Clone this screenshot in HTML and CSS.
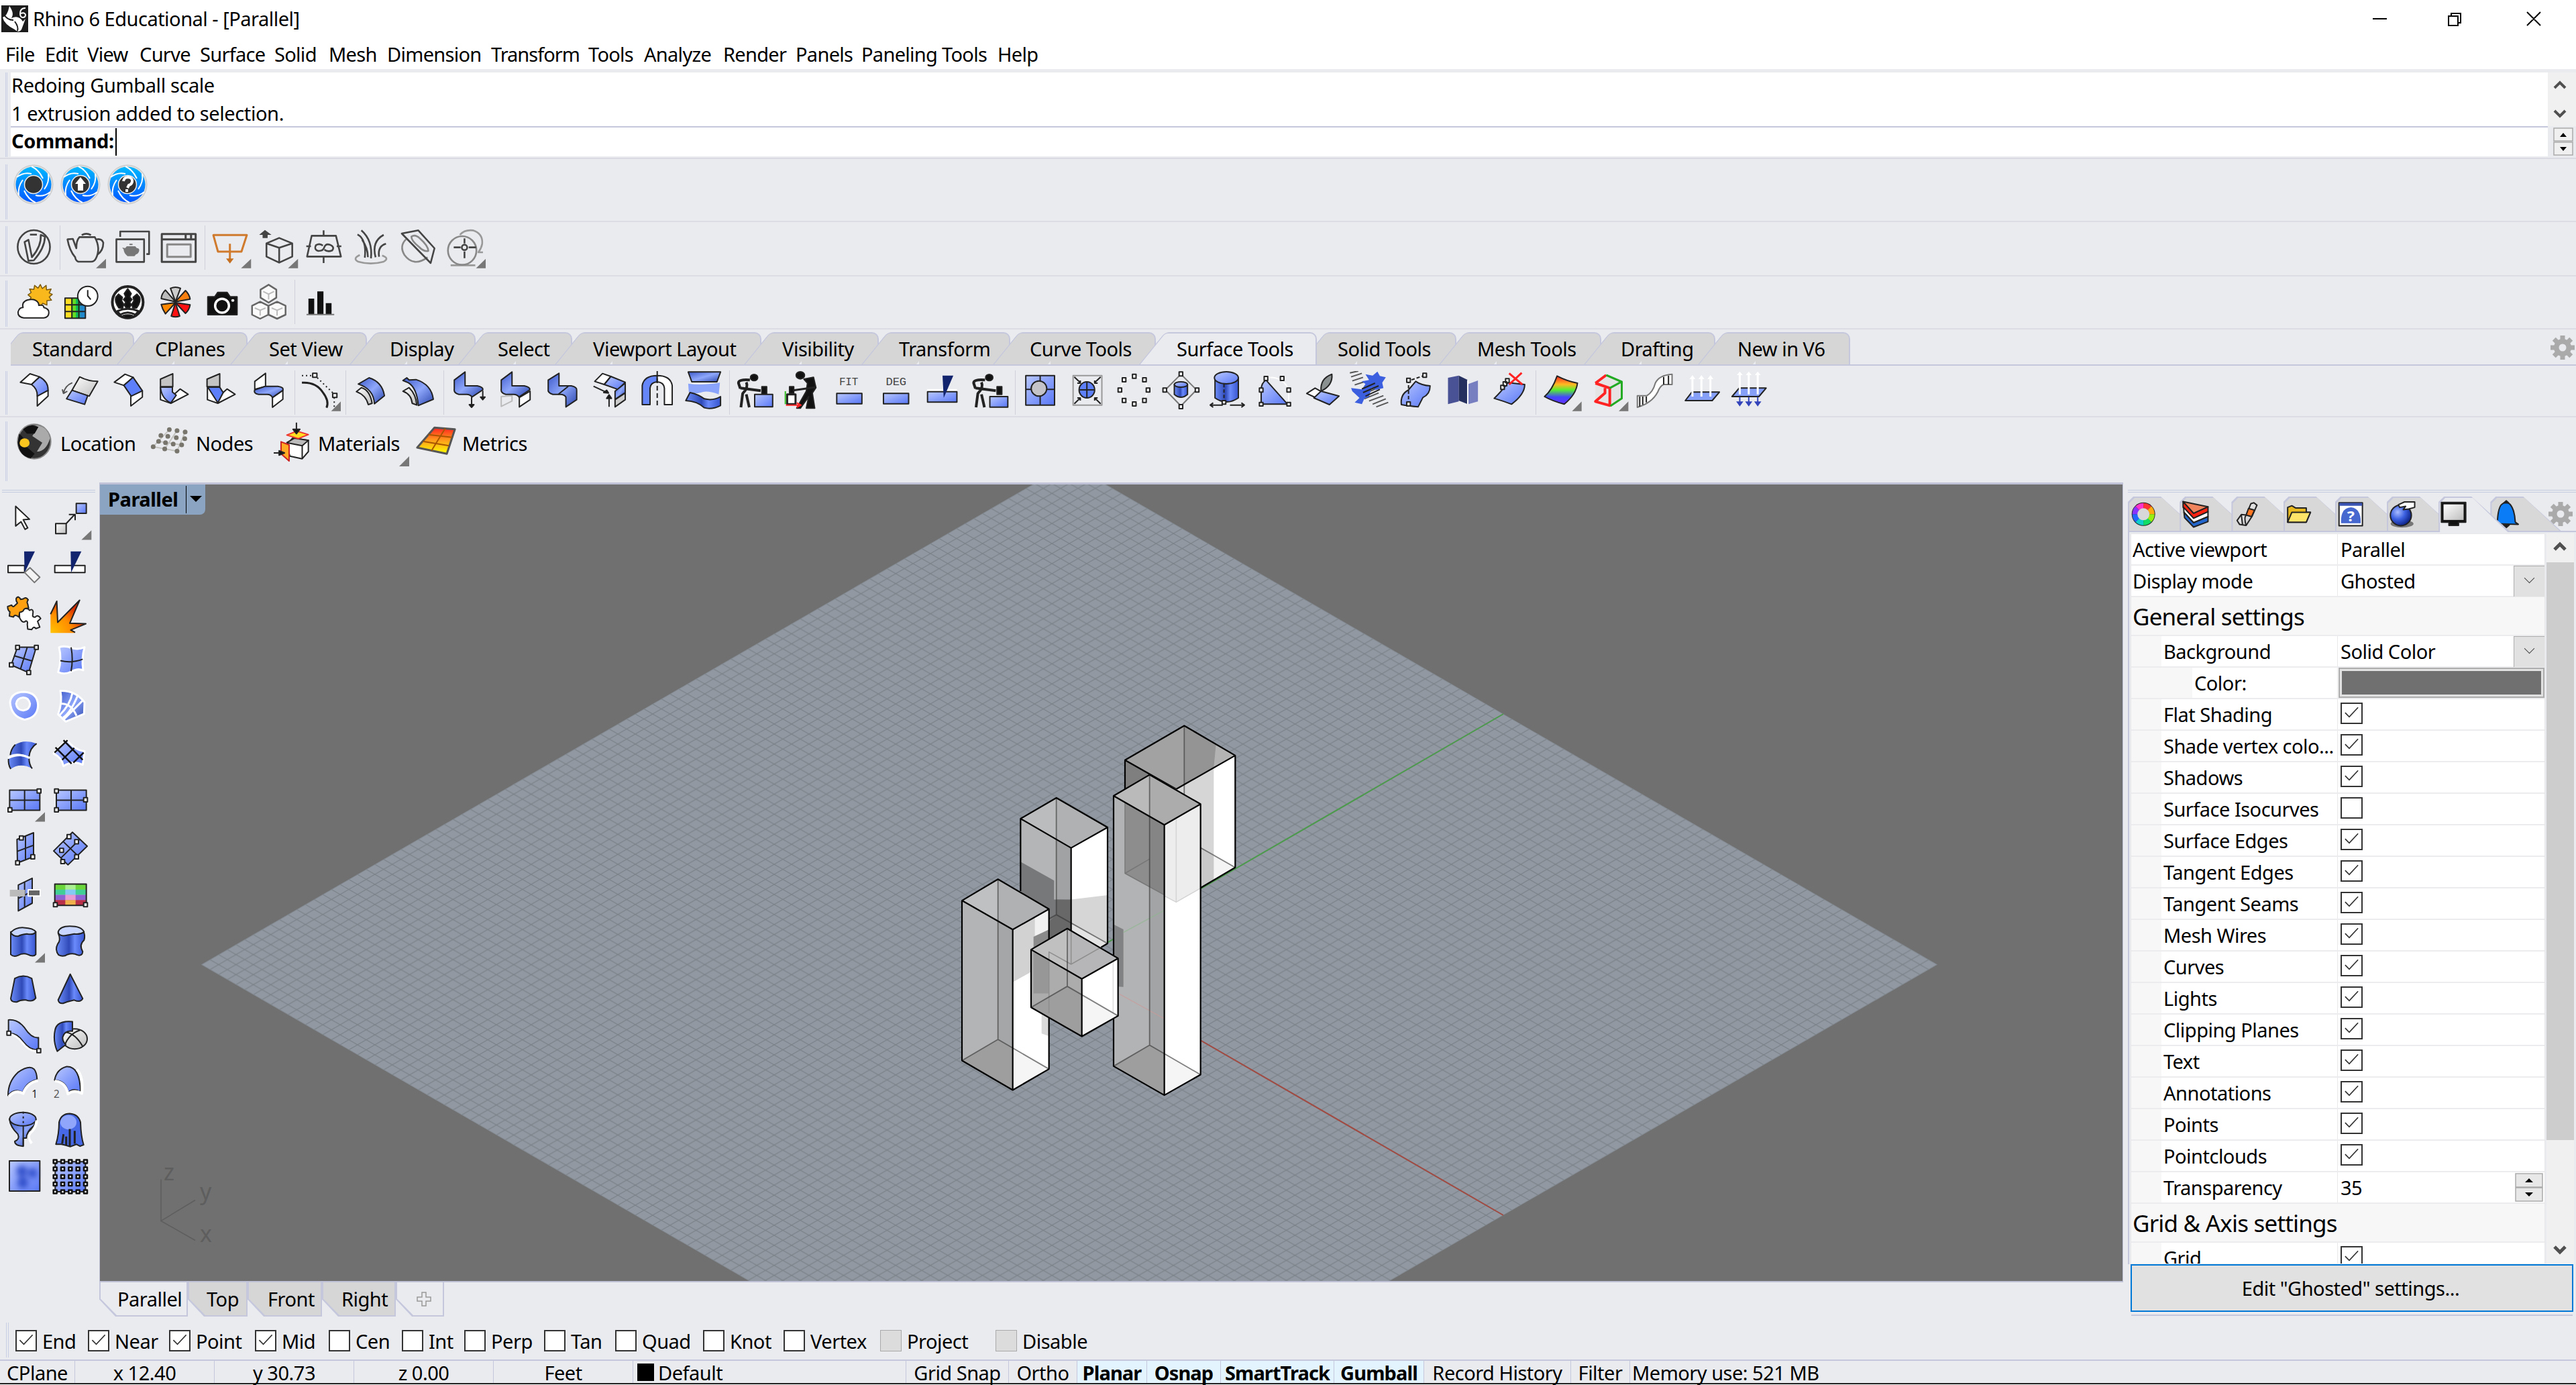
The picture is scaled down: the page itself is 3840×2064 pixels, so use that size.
FILE: index.html
```html
<!DOCTYPE html>
<html lang="en">
<head>
<meta charset="utf-8">
<title>Rhino 6 Educational - [Parallel]</title>
<link rel="stylesheet" href="styles.css">
</head>
<body>
<svg class="defs" width="0" height="0">
  <defs>
    <linearGradient id="gb" x1="0" y1="0" x2="1" y2="1"><stop offset="0" stop-color="#b9c8ff"/><stop offset="1" stop-color="#5877f6"/></linearGradient>
    <linearGradient id="gd" x1="0" y1="0" x2="1" y2="1"><stop offset="0" stop-color="#3b58c8"/><stop offset=".5" stop-color="#8fa8fb"/><stop offset="1" stop-color="#2a45ad"/></linearGradient>
    <linearGradient id="gh" x1="0" y1="0" x2="1" y2="0"><stop offset="0" stop-color="#6d8df8"/><stop offset=".45" stop-color="#2f4ab8"/><stop offset=".65" stop-color="#6a89fa"/><stop offset="1" stop-color="#3655cf"/></linearGradient>
    <linearGradient id="gg" x1="0" y1="0" x2="1" y2="1"><stop offset="0" stop-color="#fff"/><stop offset="1" stop-color="#bdbdbd"/></linearGradient>
    <linearGradient id="gr" x1="0" y1="0" x2="0" y2="1"><stop offset="0" stop-color="#f22"/><stop offset=".3" stop-color="#fb2"/><stop offset=".5" stop-color="#5e3"/><stop offset=".75" stop-color="#44f"/><stop offset="1" stop-color="#63f"/></linearGradient>
    <linearGradient id="ga" x1="0" y1="0" x2="0" y2="1"><stop offset="0" stop-color="#00b8ff"/><stop offset="1" stop-color="#0058ff"/></linearGradient>
    <linearGradient id="gm" x1="0" y1="0" x2="0" y2="1"><stop offset="0" stop-color="#f22"/><stop offset=".5" stop-color="#ffa01c"/><stop offset="1" stop-color="#ff0"/></linearGradient>
    <radialGradient id="gs" cx=".35" cy=".35" r=".7"><stop offset="0" stop-color="#a8bcff"/><stop offset=".5" stop-color="#3b60e0"/><stop offset="1" stop-color="#0a1f80"/></radialGradient>
    <radialGradient id="gf" cx="0" cy="1" r="1"><stop offset="0" stop-color="#ffc400"/><stop offset=".6" stop-color="#ff8c00"/><stop offset="1" stop-color="#d62b00"/></radialGradient>
    <symbol id="iris" viewBox="-30 -30 60 60" overflow="visible">
      <circle r="29" fill="#dcdcdc" stroke="#c6c6c6"/><circle r="26.500" fill="url(#ga)" stroke="none"/>
      <g fill="none" stroke="#fff" stroke-width="2"><path d="M-3-27Q8-22 14-9"/><path d="M22-16Q24-4 16 7"/><path d="M25 11Q15 19 3 16"/><path d="M3 27Q-8 22-14 9"/><path d="M-22 16Q-24 4-16-7"/><path d="M-25-11Q-15-19-3-16"/></g>
      <circle r="13.500" fill="#333" stroke="#eee" stroke-width="1.500"/>
    </symbol>
    <symbol id="gear" viewBox="-20 -20 40 40">
      <g fill="#aaa"><circle r="13"/><g id="t"><rect x="-3.500" y="-18" width="7" height="36"/><rect x="-18" y="-3.500" width="36" height="7"/></g><use href="#t" transform="rotate(45)"/></g><circle r="5.500" fill="#eaebef"/>
    </symbol>
    <symbol id="tick" viewBox="0 0 32 32"><path d="M5 15L12 22L27 6" fill="none" stroke="#333" stroke-width="2"/></symbol>
    <pattern id="grid" patternUnits="userSpaceOnUse" x="1594" y="1437" width="25.880" height="14.940"><path d="M0 0L25.880 14.940M0 14.940L25.880 0" stroke="#7b8289" stroke-width="1.200"/></pattern>
  </defs>
</svg>

<header class="title">
  <svg class="logo" viewBox="0 0 40 40"><rect width="40" height="40" fill="#1c1c1c"/><path d="M12 1Q20 12 15 19Q26 14 32 24L36 20L30 36Q26 42 20 36Q4 28 2 18Q9 16 12 1z" fill="#fff"/><path d="M3 12Q8 22 18 22M20 24q6 8 4 14" stroke="#1c1c1c" fill="none" stroke-width="2"/><path d="M36 4Q28 4 28 12Q28 18 32 18Q36 18 36 14Q35 10 29 12" fill="none" stroke="#fff" stroke-width="2"/></svg>
  <span>Rhino 6 Educational - [Parallel]</span>
  <svg class="winctl" viewBox="0 0 260 40"><g fill="none" stroke="#000" stroke-width="2"><path d="M11 20H32M124 16h14v14h-14zM128 16v-4h14v14h-4M241 10l20 20M261 10l-20 20"/></g></svg>
</header>
<nav class="menu"><span>File</span><span>Edit</span><span>View</span><span>Curve</span><span>Surface</span><span>Solid</span><span>Mesh</span><span>Dimension</span><span>Transform</span><span>Tools</span><span>Analyze</span><span>Render</span><span>Panels</span><span>Paneling Tools</span><span>Help</span></nav>

<section class="cmd">
  <div class="cmdtext"><p>Redoing Gumball scale</p><p>1 extrusion added to selection.</p><p class="prompt"><b>Command:</b><i></i></p></div>
  <svg class="cmdscroll" viewBox="0 0 42 125"><rect width="42" height="80" fill="#f0f0f0"/><g fill="none" stroke="#505050" stroke-width="4"><path d="M10 23l8-8 8 8M10 57l8 8 8-8"/></g><g fill="#f0f0f0" stroke="#aaa" stroke-width="1.500"><path d="M9 83h28v19H9zM9 104h28v19H9z"/></g><path d="M18 96l5-6 5 6zM18 111l5 6 5-6z"/></svg>
</section>

<section class="bar bar1">
  <svg class="round" viewBox="-30 -30 60 60"><use href="#iris" x="-30" y="-30" width="60" height="60"/></svg>
  <svg class="round" viewBox="-30 -30 60 60"><use href="#iris" x="-30" y="-30" width="60" height="60"/><path d="M0-11L8-1H4V9H-4V-1H-8z" fill="#fff"/></svg>
  <svg class="round" viewBox="-30 -30 60 60"><use href="#iris" x="-30" y="-30" width="60" height="60"/><path d="M-6-5Q-5-11 1-11Q8-10 7-4Q6 0 2 1L0 5M-1 7v4" fill="none" stroke="#fff" stroke-width="4"/></svg>
</section>

<section class="bar bar2">
  <svg class="ic o" preserveAspectRatio="none" viewBox="28 51 122 192"><ellipse cx="88" cy="144" rx="42" ry="75"/><path d="M64 122L74 112L83 190Q108 140 106 90L117 98Q116 150 88 204L74 206z"/><path d="M78 89h18"/></svg>
  <i class="sep"></i>
  <svg class="ic o" preserveAspectRatio="none" viewBox="160 51 122 192"><path d="M175 110L189 108L198 150Q198 115 206 100H246Q262 150 249 195Q245 210 236 210H203Q196 205 195 190Q180 160 175 110zM250 110Q264 105 268 125Q268 160 253 178M212 91q12-12 24 0"/><path class="tri" d="M249 239L275 197V239z"/></svg>
  <svg class="ic o" preserveAspectRatio="none" viewBox="282 51 122 192"><path d="M302 110H374V211H302zM312 99V75H387V176H380"/><path class="n" fill="#777" d="M317 147l8 2 4-8h22l4 8q8 0 6 14q-2 12-8 14l-4 8h-18q-10-14-10-30zM336 136v-6h8v6z"/></svg>
  <svg class="ic o" preserveAspectRatio="none" viewBox="404 51 122 192"><path d="M420 86H508V211H420zM420 110H508M482 88v20M496 88v20" stroke-width="3"/><path d="M434 133H495V188H434z" stroke="#888" stroke-width="3"/></svg>
  <i class="sep"></i>
  <svg class="ic" preserveAspectRatio="none" viewBox="536.500 51 122 192"><path d="M554 91H641L627 165H566zM597 130V200" stroke="#cf7a2c" stroke-width="3"/><path class="n" fill="#c56f20" d="M587 196h20l-10 22z"/><path class="tri" d="M626 239L652 197V239z"/></svg>
  <svg class="ic o" preserveAspectRatio="none" viewBox="658.500 51 122 192"><path d="M725 104L759 128V187L725 214L692 187V128zM692 128L725 148L759 128M725 148V214"/><path class="n" fill="#444" d="M688 68L705 90H695V104H682V90H673z"/><path class="tri" d="M748 239L774 197V239z"/></svg>
  <svg class="ic o" preserveAspectRatio="none" viewBox="780 51 122 192"><path d="M809 94H872L885 187H797zM840 70V94M840 187V216M795 141h12M874 141h12"/><path d="M838 138Q830 126 820 136Q814 156 826 162Q840 162 842 144Q846 128 856 134Q870 144 862 160Q850 168 842 156"/></svg>
  <svg class="ic o" preserveAspectRatio="none" viewBox="902 51 122 192"><path d="M938 70Q968 115 963 195M928 88Q952 110 947 192M940 112Q955 150 955 190M975 190Q964 120 996 90M984 188Q980 140 1002 130"/><path d="M934 180Q914 196 930 210Q962 226 996 210Q1012 194 992 182" stroke="#999"/></svg>
  <svg class="ic o" preserveAspectRatio="none" viewBox="1024 51 122 192"><path d="M1054 110Q1036 140 1050 180Q1074 236 1110 190" stroke="#888"/><path d="M1043 84L1086 70L1128 150L1118 216z"/><path d="M1068 98Q1078 86 1090 106Q1112 140 1112 162Q1100 166 1088 144Q1068 116 1068 98z" stroke="#888"/></svg>
  <svg class="ic o" preserveAspectRatio="none" viewBox="1146 51 122 192"><path d="M1194 90Q1206 66 1228 70Q1254 84 1252 130Q1250 150 1242 168H1254M1170 226H1234" stroke="#999"/><ellipse cx="1200" cy="160" rx="37" ry="64" stroke="#888"/><path d="M1206 106v22M1206 164v30M1178 146h18M1217 146h19"/><ellipse cx="1206" cy="146" rx="7" ry="12"/><path class="tri" d="M1236 239L1261 197V239z"/></svg>
</section>

<section class="bar bar3">
  <svg class="ic" preserveAspectRatio="none" viewBox="28 291 122 192"><path fill="#f9b81c" stroke="#7a5a10" stroke-width="1.500" d="M105 309l5 18 10-14 1 20 12-4-5 18 8 6-8 12 6 14-12 2 0 20-11-8-7 16-7-14-11 8-1-18-10-2 6-16-8-12 8-10-4-16 11 2 2-18 9 12z"/><path class="w" d="M62 458Q46 454 47 432Q50 412 60 412Q56 386 72 378Q92 370 100 392L101 402Q114 398 114 412Q128 418 127 436Q126 456 114 458z"/></svg>
  <svg class="ic" preserveAspectRatio="none" viewBox="150 291 122 192"><path class="n" fill="#fd2" d="M169 370h18v90h-18z"/><path class="n" fill="#6d2" d="M185 370h14v90h-14z"/><path class="n" fill="#1b5" d="M197 370h12v90h-12z"/><path class="n" fill="#28c" d="M208 370h14v90h-14z"/><path d="M169 370H222V460H169zM169 400H222M169 430H222M187 370V460M205 370V460"/><ellipse class="w" cx="228" cy="361" rx="26" ry="44"/><path d="M228 334V360L236 376"/></svg>
  <svg class="ic" preserveAspectRatio="none" viewBox="272 291 122 192"><ellipse class="w" cx="332" cy="388" rx="40" ry="70" stroke-width="4"/><path class="k" d="M332 328l9 22-4 14 6 12-6 12 4 12-5 14h-8l-5-14 4-12-6-12 6-12-4-14zM308 352l10 14-2 16 5 14-2 18h-10q-12-30-8-48zM356 352l-10 14 2 16-5 14 2 18h10q12-30 8-48z"/><path d="M305 428Q332 408 360 428L352 444Q332 424 312 444z" class="w" stroke-width="3"/><path class="k" d="M320 448q12-6 24 0l-6 12h-12z"/></svg>
  <svg class="ic" preserveAspectRatio="none" viewBox="394 291 122 192"><path d="M456 386L443 326Q456 316 469 326z" fill="#ccc"/><path d="M456 386L430 334Q420 350 419 372z" fill="#bbb"/><path d="M456 386L482 336Q492 352 494 374z" fill="#f77f10"/><path d="M456 390L419 398Q422 420 430 440z" fill="#f80"/><path d="M456 390L494 400Q492 422 482 438z" fill="#f11"/><path d="M456 390L445 450Q456 458 467 450z" fill="#f11"/></svg>
  <svg class="ic" preserveAspectRatio="none" viewBox="516 291 122 192"><path class="k" d="M540 364H558L566 344H590L598 364H616V444H540z"/><ellipse cx="577" cy="404" rx="18" ry="31" stroke="#fff" stroke-width="3.500"/><ellipse class="w n" cx="605" cy="380" rx="4" ry="6"/></svg>
  <svg class="ic" preserveAspectRatio="none" viewBox="638 291 122 192"><g stroke="#666" fill="#fafafa" stroke-width="2.500"><path d="M698 310L718 332V368L698 390L677 368V332z"/><path d="M676 386L697 404V444L676 462L655 444V404zM720 386L742 404V444L720 462L698 444V404z"/></g><path d="M684 340L698 352L712 340M698 352V376M662 414L676 424L690 414M676 424V448M706 414L720 424L734 414M720 424V448" stroke="#bbb"/></svg>
  <i class="sep"></i>
  <svg class="ic" preserveAspectRatio="none" viewBox="770 291 122 192"><path class="k n" d="M801 372h15v70h-15zM824 340h16v102h-16zM846 392h15v50h-15z"/><path d="M796 443H868" stroke="#777"/></svg>
</section>

<section class="tabs"><span>Standard</span><span>CPlanes</span><span>Set View</span><span>Display</span><span>Select</span><span>Viewport Layout</span><span>Visibility</span><span>Transform</span><span>Curve Tools</span><span class="on">Surface Tools</span><span>Solid Tools</span><span>Mesh Tools</span><span>Drafting</span><span>New in V6</span><svg class="gear" viewBox="0 0 40 40"><use href="#gear" width="40" height="40"/></svg></section>

<section class="bar tools">
  <svg class="ic" preserveAspectRatio="none" viewBox="28 696 122 192"><path class="w" d="M53 746L78 708L103 722L82 756zM97 852V806L125 782V808z"/><path class="b" d="M82 756L103 722Q126 744 125 782L97 808Q98 776 82 756z"/></svg>
  <svg class="ic" preserveAspectRatio="none" viewBox="150 696 122 192"><path class="g" d="M187 782L207 722Q230 742 254 742L232 808z"/><path class="b" d="M187 782L228 806L220 845L173 820z"/><path d="M188 748Q170 760 165 794M162 778l3 18 10-10" stroke="#555"/></svg>
  <svg class="ic" preserveAspectRatio="none" viewBox="272 696 122 192"><path class="w" d="M297 746L325 710L346 724L322 760zM340 852V806L370 784V812z"/><path fill="#5d80fa" d="M322 760L346 724L370 784L341 808z"/></svg>
  <svg class="ic" preserveAspectRatio="none" viewBox="394 696 122 192"><path fill="#c4c4c4" d="M417 766V732L449 708V766z"/><path class="w" d="M417 770V824L444 840L489 800L468 776L450 804z"/><path class="b" d="M417 768H448V790L458 804L444 838Q420 820 417 768z"/></svg>
  <svg class="ic" preserveAspectRatio="none" viewBox="516 696 122 192"><path fill="#c4c4c4" d="M538 766V732L571 708V766z"/><path class="w" d="M539 770V824L566 840L611 800L590 776L572 804z"/><path fill="#5d80fa" d="M540 768H571L580 792L566 838z"/></svg>
  <svg class="ic" preserveAspectRatio="none" viewBox="638 696 122 192"><path class="w" d="M662 778V742L690 706V764zM708 858V814L735 782V822z"/><path class="d" d="M662 780L690 764H722Q738 768 735 782L708 814Q704 800 694 800H672Q658 796 662 780z"/></svg>
  <i class="sep"></i>
  <svg class="ic" preserveAspectRatio="none" viewBox="770 696 122 192"><path d="M784 716H810M824 726L866 796M868 814V856" stroke-dasharray="2 4"/><path d="M784 748Q820 744 838 790Q856 830 848 860" stroke-width="3"/><path class="w" d="M812 706h11v18h-11zM864 796h11v18h-11z"/><path class="tri" d="M860 875L885 832V875z"/></svg>
  <i class="sep"></i>
  <svg class="ic" preserveAspectRatio="none" viewBox="902 696 122 192"><path class="g" d="M925 788L938 770Q960 780 966 840L956 846Q950 804 925 788z"/><path class="d" d="M930 754L958 726Q992 744 998 806L972 842Q970 776 930 754z"/></svg>
  <svg class="ic" preserveAspectRatio="none" viewBox="1024 696 122 192"><path class="g" d="M1046 786L1062 770Q1080 800 1082 848L1070 840Q1068 800 1046 786z"/><path class="d" d="M1046 738L1056 726L1062 736L1080 734Q1120 756 1125 822L1086 850Q1082 770 1060 748z"/></svg>
  <i class="sep"></i>
  <svg class="ic" preserveAspectRatio="none" viewBox="1157 696 122 192"><path class="d" d="M1180 736L1208 700V762H1240Q1256 768 1254 780L1226 812Q1222 800 1212 800H1192Q1178 794 1180 776z"/><path d="M1225 812V846M1254 784V812"/><path class="k" d="M1219 846h12l-6 12zM1248 812h12l-6 12z"/></svg>
  <svg class="ic" preserveAspectRatio="none" viewBox="1279 696 122 192"><path d="M1302 854V810L1330 806V830z" stroke="#bbb"/><path class="w" d="M1349 856V814L1377 786V824z"/><path class="d" d="M1302 736L1330 700V762H1362Q1378 768 1376 780L1348 812Q1344 800 1334 800H1314Q1300 794 1302 776z"/></svg>
  <svg class="ic" preserveAspectRatio="none" viewBox="1401 696 122 192"><path class="d" d="M1424 736L1452 706V762H1484Q1500 768 1498 782V824L1470 856V812Q1466 800 1456 800H1436Q1422 794 1424 776z"/><path d="M1450 800L1476 764"/></svg>
  <svg class="ic" preserveAspectRatio="none" viewBox="979 186 78.400 192"><path class="w" d="M993 232L1006 197L1020 210L1009 246z"/><path class="b" d="M1009 246L1020 210L1044 236L1032 268z"/><path class="d" d="M1027 276L1044 240V282L1027 312z"/><path fill="#ccc" d="M1027 314L1044 284V314L1027 346z"/><path d="M991 254L1012 280M1017 346V300"/><path class="k" d="M1017 292l4 16h-8zM1016 284l-8-2 5-10z"/></svg>
  <svg class="ic" preserveAspectRatio="none" viewBox="1057 186 78.400 192"><path fill="#6486f8" d="M1072 336V250Q1075 206 1097 206V234Q1086 236 1085 262V336z"/><path class="w" d="M1122 336V250Q1119 206 1097 206V234Q1108 236 1109 262V336z"/><path d="M1097 186V350" stroke-dasharray="7 4"/></svg>
  <svg class="ic" preserveAspectRatio="none" viewBox="1135.700 186 78.400 192"><path class="d" d="M1149 190H1203L1197 234H1155z"/><path class="n" fill="#8aa4fb" d="M1149 242Q1170 252 1202 238L1200 290Q1180 270 1170 282Q1156 290 1150 280z"/><path class="gh" d="M1145 318L1152 282Q1166 290 1176 310Q1190 320 1203 300V340Q1188 360 1176 350Q1164 320 1145 318z"/></svg>
  <i class="sep"></i>
  <svg class="ic" preserveAspectRatio="none" viewBox="1220.800 186 78.400 192"><ellipse class="k" cx="1259" cy="215" rx="6" ry="14"/><path d="M1252 226Q1232 222 1233 240L1236 264M1246 236Q1250 260 1240 286L1237 348M1246 290L1251 348M1236 262L1270 274" stroke-width="4"/><path class="k" d="M1272 256h8v34h-8z"/><path class="b" d="M1260 290H1290V346H1260z"/></svg>
  <svg class="ic" preserveAspectRatio="none" viewBox="1299 186 78.400 192"><ellipse class="k" cx="1336" cy="205" rx="7" ry="16"/><path class="k" d="M1342 222L1358 214L1362 260L1356 284L1360 352H1346L1350 300L1336 352H1330L1346 276L1348 240z"/><path d="M1362 258L1320 274" stroke-width="3"/><path class="k" d="M1318 256h7v30h-7z"/><path class="w" d="M1314 290h14v44h-14z" stroke-width="3"/><path d="M1311 334V276" stroke="#3b2"/><path d="M1312 338H1336M1330 328l7 10-7 10" stroke="#f22"/></svg>
  <svg class="ic" preserveAspectRatio="none" viewBox="1377.600 186 78.400 192"><text transform="translate(1401 250) scale(.373 1)" font-size="48" fill="#444" class="mono">FIT</text><path class="b" d="M1397 286h42v46h-42z"/></svg>
  <svg class="ic" preserveAspectRatio="none" viewBox="1456 186 78.400 192"><text transform="translate(1479 250) scale(.4 1)" font-size="48" fill="#444" class="mono">DEG</text><path class="b" d="M1475 286h42v46h-42z"/></svg>
  <svg class="ic" preserveAspectRatio="none" viewBox="-11.200 186 78.400 192"><path class="n w" d="M2 266h50v12H2z"/><path class="b" d="M3 278H52V325H3z"/><path class="n" fill="#12246e" d="M28 206H46L30 306z"/></svg>
  <svg class="ic" preserveAspectRatio="none" viewBox="67.200 186 78.400 192"><ellipse class="k" cx="106" cy="215" rx="6" ry="14"/><path d="M99 226Q79 222 80 240L83 264M93 236Q97 260 87 286L84 348M93 290L98 348M83 262L117 274" stroke-width="4"/><path class="k" d="M119 256h8v34h-8z"/><path class="b" d="M107 300H137V347H107z"/></svg>
  <i class="sep"></i>
  <svg class="ic" preserveAspectRatio="none" viewBox="152.300 186 78.400 192"><path class="b" d="M167 206H215V338H167zM167 268H215M191 206V338"/><ellipse cx="189" cy="264" rx="13" ry="34" fill="#c4c4c8"/></svg>
  <svg class="ic" preserveAspectRatio="none" viewBox="230.700 186 78.400 192"><path d="M246 206H294V338H246z" stroke="#999"/><path d="M248 212l10 26M292 212l-10 26M248 332l10-26M292 332l-10-26M258 228v12h-5M282 228v12h5M258 318v-12h-5M282 318v-12h5"/><ellipse cx="269" cy="270" rx="13" ry="36" fill="#5d80fa"/><path d="M256 270h26M269 234v72"/></svg>
  <svg class="ic" preserveAspectRatio="none" viewBox="309 186 78.400 192"><ellipse cx="348" cy="270" rx="22" ry="58" stroke="#fff"/><path class="w" d="M345 200h6v18h-6zM328 216h6v18h-6zM362 216h6v18h-6zM321 262h6v18h-6zM368 262h6v18h-6zM328 308h6v18h-6zM362 308h6v18h-6zM345 324h6v18h-6z"/></svg>
  <svg class="ic" preserveAspectRatio="none" viewBox="387.500 186 78.400 192"><path d="M426 200L452 270L426 342L400 270z" stroke="#777"/><path class="gh" d="M415 246V290Q426 316 437 290V246z"/><ellipse class="b" cx="426" cy="246" rx="11" ry="12"/><path class="w" d="M423 190h6v18h-6zM396 262h6v18h-6zM450 262h6v18h-6zM423 336h6v18h-6z"/></svg>
  <svg class="ic" preserveAspectRatio="none" viewBox="466 186 78.400 192"><path class="gh" d="M483 216V306Q502 342 522 306V216z"/><ellipse class="b" cx="502" cy="216" rx="20" ry="27"/><path d="M498 244V320" stroke-dasharray="5 3"/><path class="w" d="M495 318h6v16h-6z"/><path d="M476 338H496M508 338H530M480 328l-5 10 5 10M527 328l5 10-5 10"/></svg>
  <svg class="ic" preserveAspectRatio="none" viewBox="544.300 186 78.400 192"><path d="M568 216Q596 206 606 270V330" stroke="#fff"/><path class="b" d="M560 334V270Q560 240 568 226L604 334z"/><path class="w" d="M565 210h6v18h-6zM592 210h6v18h-6zM557 262h6v18h-6zM603 262h6v18h-6zM557 326h6v16h-6zM603 326h6v16h-6z"/></svg>
  <svg class="ic" preserveAspectRatio="none" viewBox="622.700 186 78.400 192"><path class="w" d="M636 286L650 262L662 280L652 306z"/><path class="b" d="M660 276L690 298L674 336L648 306z"/><path fill="#8a8f8f" d="M660 276Q658 220 678 200Q680 250 660 276z"/></svg>
  <svg class="ic" preserveAspectRatio="none" viewBox="701 186 78.400 192"><path d="M708 194L722 186M710 212L728 196M712 230L730 214M716 248L732 234M724 296L754 262M732 310L756 284M740 320L764 296M746 334L768 310M752 346L772 326" stroke="#555"/><path class="n" fill="#3c5fe0" d="M734 200L746 206 754 188 758 208 768 214 762 238 764 262 752 270 744 262 740 300 732 310 728 334 716 326 724 306 712 276 710 262 728 268 734 244 728 232 740 226z"/><path d="M728 266L750 240M730 282L756 252M734 298L758 268"/></svg>
  <svg class="ic" preserveAspectRatio="none" viewBox="779.500 186 78.400 192"><path class="b" d="M794 336Q792 290 806 270L818 232Q828 250 842 252Q842 290 830 304L822 346Q806 342 794 336z"/><path d="M806 336V230L834 204" stroke-dasharray="5 3"/><path class="w" d="M803 218h6v18h-6zM830 196h6v18h-6zM803 324h6v18h-6z"/></svg>
  <svg class="ic" preserveAspectRatio="none" viewBox="858 186 78.400 192"><path class="n" fill="#4a5296" d="M872 216L890 206V322L872 334z"/><path class="n" fill="#26305f" d="M890 206L905 226V334L890 318z"/><path class="n" fill="#777fc0" d="M906 244L922 228V322L906 334z"/><path d="M905 226V334" stroke="#fff"/></svg>
  <svg class="ic" preserveAspectRatio="none" viewBox="936.300 186 78.400 192"><path class="b" d="M949 308Q960 280 972 238L1000 246Q1000 290 978 334Q964 320 949 308z"/><path class="w" d="M960 250h6v18h-6zM964 234h6v18h-6zM968 220h6v18h-6z"/><path d="M974 196L996 246M995 194L974 246" stroke="#f22" stroke-width="3"/></svg>
  <i class="sep"></i>
  <svg class="ic" preserveAspectRatio="none" viewBox="1021.400 186 78.400 192"><path fill="url(#gr)" d="M1033 300Q1046 270 1054 208Q1070 230 1088 240Q1086 290 1066 334Q1046 320 1033 300z"/><path class="tri" d="M1079 365L1095 322V365z"/></svg>
  <svg class="ic" preserveAspectRatio="none" viewBox="1099.800 186 78.400 192"><path class="n" fill="#e4e4e4" d="M1136 204L1162 232V310L1143 342L1118 324V232z"/><path d="M1118 240L1136 204M1118 240L1142 262V340L1118 322L1134 284V262M1118 240" stroke="#f22" stroke-width="4"/><path d="M1136 204L1162 234V308L1143 342M1142 262L1160 236" stroke="#2a2" stroke-width="3"/><path class="tri" d="M1157 365L1173 322V365z"/></svg>
  <svg class="ic" preserveAspectRatio="none" viewBox="1178.200 186 78.400 192"><path fill="#fff" stroke="#777" d="M1188 348V296H1204Q1214 280 1218 240Q1224 204 1246 200V246H1232Q1226 252 1222 280Q1212 330 1188 348z"/><path d="M1192 300v44M1197 300v36M1203 300v26M1232 212v34M1240 206v40"/></svg>
  <svg class="ic" preserveAspectRatio="none" viewBox="1256.600 186 78.400 192"><path fill="#86a0f8" d="M1268 318L1279 280H1325L1313 318z"/><path d="M1280 300V216M1295 300V216M1310 300V216" stroke="#fff" stroke-width="3"/><path class="n w" d="M1275 222l5-18 5 18zM1290 222l5-18 5 18zM1305 222l5-18 5 18z"/></svg>
  <svg class="ic" preserveAspectRatio="none" viewBox="1335 186 78.400 192"><path fill="#86a0f8" d="M1346 300L1358 262H1403L1391 300z"/><path d="M1359 290V200M1374 290V200M1389 290V200" stroke="#fff" stroke-width="3"/><path class="n w" d="M1354 204l5-16 5 16zM1369 204l5-16 5 16zM1384 204l5-16 5 16z"/><path d="M1359 302V326M1374 302V326M1389 302V326" stroke="#34b"/><path class="n" fill="#34b" d="M1353 322h12l-6 22zM1368 322h12l-6 22zM1383 322h12l-6 22z"/></svg>
</section>

<section class="bar plugins">
  <svg class="ic" preserveAspectRatio="none" viewBox="28 925 122 192"><ellipse cx="89" cy="1015" rx="43" ry="77" fill="#333" stroke="#888"/><path class="n" fill="#aaa" d="M76 945Q120 930 130 1000Q120 1060 96 1060L110 1020L84 990L96 960z"/><path class="n" fill="#111" d="M60 960q20-30 40-10l-10 30-20 0zM50 980q20 30 20 60l20 30-10 20q-30-10-34-70z"/><ellipse class="n" cx="64" cy="1021" rx="13" ry="20" fill="#fbc520"/></svg>
  <label>Location</label>
  <svg class="ic" preserveAspectRatio="none" viewBox="386 925 122 192"><path d="M404 1038L446 962M434 1048L466 966M466 1058L487 972M404 1038L466 1058M418 1014L478 1030" stroke="#c4c4c0"/><path d="M446 962h.1M466 966h.1M487 972h.1M424 988h.1M442 992h.1M464 998h.1M486 1002h.1M418 1014h.1M436 1020h.1M456 1026h.1M478 1030h.1M404 1038h.1M434 1048h.1M466 1058h.1" stroke="#77756c" stroke-width="7" stroke-linecap="round"/></svg>
  <label>Nodes</label>
  <svg class="ic" preserveAspectRatio="none" viewBox="702 925 122 192"><path class="w" d="M750 1030L765 1000L806 1010V1060L790 1092L758 1080z"/><path fill="#bbb" d="M750 1020L770 1000L806 1010L790 1034z"/><path d="M790 1034V1092"/><path d="M750 986L776 968L806 984L780 1002z" fill="#fd2" stroke="#e33"/><path d="M735 1016L756 1030V1102L735 1070z" fill="#fa2" stroke="#c22"/><path d="M775 930V966M716 1066H734"/><path class="k" d="M766 960h18l-9 20zM730 1056l14 10-14 10z"/></svg>
  <label class="mat">Materials<svg viewBox="0 0 15 15"><path d="M0 15L15 0V15z" fill="#777"/></svg></label>
  <svg class="ic" preserveAspectRatio="none" viewBox="1077 925 122 192"><path fill="url(#gm)" stroke="#555" stroke-width="3" d="M1089 1042L1134 953L1187 960L1166 1070z"/><path d="M1104 1014L1172 1034M1118 984L1180 996M1126 1056L1162 956" stroke="#a50"/></svg>
  <label>Metrics</label>
</section>

<main>
  <aside class="left">
    <svg class="ic" preserveAspectRatio="none" viewBox="0 70 210 196"><path class="w" d="M70 122L132 176L104 178L124 212L112 218L94 186L70 204z"/></svg>
    <svg class="ic" preserveAspectRatio="none" viewBox="212 70 210 196"><path class="b" d="M343 110H388V151H343z"/><path class="g" d="M251 194H298V236H251z"/><path d="M298 194L336 156M310 156H338V180"/><path class="tri" d="M366 262L411 222V262z"/></svg>
    <svg class="ic" preserveAspectRatio="none" viewBox="0 266 210 196"><path class="w" d="M36 369H110V398H36z"/><path class="n" fill="#12246e" d="M108 310H156L110 398z"/><path d="M110 398L134 378L178 418L154 440z" stroke="#777" fill="#f4f4f4"/></svg>
    <svg class="ic" preserveAspectRatio="none" viewBox="212 266 210 196"><path class="w" d="M247 369H382V398H247z"/><path class="n" fill="#12246e" d="M318 310H366L320 398z"/></svg>
    <svg class="ic" preserveAspectRatio="none" viewBox="0 462 210 196"><path class="w" d="M86 566L108 546L126 550L132 556Q146 548 148 562L146 580Q150 586 158 584Q170 572 182 590L168 602L178 626L160 632Q150 620 142 636L124 634L122 614Q126 602 116 600Q106 610 96 600L88 588z"/><path fill="#ffa010" d="M34 540L52 534Q58 546 66 536L78 526Q64 504 82 500Q90 504 92 510L104 508Q116 498 126 512Q118 522 124 530L128 548Q108 544 104 558Q98 564 88 564L84 584Q66 570 60 584L42 580L44 562Q34 556 34 540z"/></svg>
    <svg class="ic" preserveAspectRatio="none" viewBox="212 462 210 196"><path class="n" fill="url(#gf)" d="M228 570L256 518L260 606L358 514L314 610L386 612L318 638L338 650H228z"/><path d="M228 572L256 518L260 606L358 514L314 610L386 612L318 638L338 648"/></svg>
    <svg class="ic" preserveAspectRatio="none" viewBox="0 658 210 196"><path class="b" d="M78 710H162L128 816L50 784zM122 710L92 800M66 746L146 768"/><path class="w" d="M70 702h17v17H70zM154 702h17v17H154zM42 775h17v17H42zM120 807h17v17H120z"/></svg>
    <svg class="ic" preserveAspectRatio="none" viewBox="212 658 210 196"><path class="b wh" d="M266 710Q290 702 320 712Q350 722 380 710Q366 756 374 806Q350 796 320 812Q290 826 262 814Q280 760 266 710z"/><path d="M320 710Q330 760 320 810M272 766Q320 778 372 760"/></svg>
    <svg class="ic" preserveAspectRatio="none" viewBox="0 854 210 196"><path class="b wh" fill-rule="evenodd" d="M45 940Q50 898 106 896Q168 898 170 952Q168 1004 110 1012Q50 1000 45 940zM72 946Q76 972 104 974Q134 970 134 946Q128 920 104 920Q76 922 72 946z"/></svg>
    <svg class="ic" preserveAspectRatio="none" viewBox="212 854 210 196"><path class="gd wh" d="M272 892Q340 890 380 940L378 988L296 1020L262 990Q282 940 272 892z"/><path d="M326 900Q316 950 268 994M350 910Q320 980 284 1004M276 946Q320 944 344 996M372 932L288 1010" stroke="#fff" stroke-width="3"/></svg>
    <svg class="ic" preserveAspectRatio="none" viewBox="0 1050 210 196"><path class="n gh" d="M68 1116Q110 1092 164 1112Q134 1130 130 1166Q80 1146 46 1160Q50 1130 68 1116zM38 1176Q90 1154 130 1174Q128 1200 144 1216Q90 1190 48 1218Q36 1200 38 1176z"/><path d="M68 1116Q48 1136 46 1160M38 1176Q36 1200 48 1218M164 1112Q134 1130 130 1166M130 1174Q130 1200 144 1216"/><path d="M36 1172Q80 1148 132 1172" stroke="#fff" stroke-width="3"/></svg>
    <svg class="ic" preserveAspectRatio="none" viewBox="212 1050 210 196"><path class="b wh" d="M300 1096Q336 1140 380 1144L372 1200Q326 1180 286 1206Q278 1170 242 1154z"/><path d="M286 1098L372 1180M250 1128L322 1196M304 1098L246 1150M334 1130L280 1180M376 1150L330 1192" stroke="#111" stroke-width="2.500"/></svg>
    <svg class="ic" preserveAspectRatio="none" viewBox="0 1246 210 196"><path class="b" d="M43 1306H178V1390H43z"/><path d="M110 1306V1390M43 1348H178" /><path class="w" d="M166 1301h17v17h-17zM36 1380h17v17H36z"/><path class="tri" d="M156 1438L201 1398V1438z"/></svg>
    <svg class="ic" preserveAspectRatio="none" viewBox="212 1246 210 196"><path class="b" d="M254 1306H388V1390H254z"/><path d="M320 1306V1390M254 1348H388"/><path class="w" d="M246 1301h17v17h-17zM246 1380h17v17h-17zM376 1338h17v17h-17z"/></svg>
    <svg class="ic" preserveAspectRatio="none" viewBox="0 1442 210 196"><path class="b" d="M76 1512L150 1484V1584L78 1610zM114 1498V1596M76 1562L150 1536"/><path class="w" d="M87 1497h17v17H87zM138 1576h17v17h-17zM70 1601h17v17H70z"/></svg>
    <svg class="ic" preserveAspectRatio="none" viewBox="212 1442 210 196"><path class="b" d="M326 1482L392 1540L306 1618L242 1560zM284 1520L350 1580M358 1512L276 1588"/><path class="w" d="M302 1492h17v17h-17zM336 1513h17v17h-17zM269 1549h17v17h-17zM336 1576h17v17h-17zM274 1596h17v17h-17z"/></svg>
    <svg class="ic" preserveAspectRatio="none" viewBox="0 126 210 196"><path class="b" d="M82 190L144 162V266L82 298zM110 178V284M82 246L144 216"/><path class="n" fill="#bbb" d="M44 210H112V238H44z"/><path d="M126 210H180V236H126z" fill="#666" stroke="#fff"/></svg>
    <svg class="ic" preserveAspectRatio="none" viewBox="212 126 210 196"><g class="n"><path fill="#6bd63c" d="M246 186H388V210H246z"/><path fill="#42cf96" d="M246 209H388V232H246z"/><path fill="#8f62d4" d="M246 231H388V254H246z"/><path fill="#b8304a" d="M246 253H388V276H246z"/><path fill="#a8f090" d="M294 186h46v24h-46z"/><path fill="#84c8f4" d="M294 209h46v23h-46z"/><path fill="#e79ad4" d="M294 231h46v23h-46z"/><path fill="#f0b04c" d="M294 253h46v23h-46z"/></g><path d="M247 186H388V275H247z"/><path class="w" d="M241 264h17v17h-17zM376 264h17v17h-17z"/></svg>
    <svg class="ic" preserveAspectRatio="none" viewBox="0 322 210 196"><path class="gh" d="M48 386V480Q60 492 80 484Q104 472 124 480Q150 492 160 480V386z"/><path fill="#c9d6ff" d="M48 388Q70 366 106 368Q150 370 160 386Q150 400 120 394Q96 396 80 404Q56 404 48 388z"/><path class="tri" d="M156 514L201 474V514z"/></svg>
    <svg class="ic" preserveAspectRatio="none" viewBox="212 322 210 196"><path class="gh" d="M262 390Q276 420 260 436Q246 460 264 482Q284 492 304 480Q330 472 348 482Q370 488 372 468Q354 440 378 420Q384 400 376 386z"/><path fill="#c9d6ff" d="M262 386Q270 362 314 362Q366 362 378 386Q360 398 334 394Q300 400 284 402Q264 400 262 386z"/></svg>
    <svg class="ic" preserveAspectRatio="none" viewBox="0 518 210 196"><path class="gh" d="M66 580Q104 560 142 580L160 662Q146 680 116 670Q92 668 76 678Q50 680 48 664z"/></svg>
    <svg class="ic" preserveAspectRatio="none" viewBox="212 518 210 196"><path class="gh" d="M316 562L372 664Q362 682 334 670Q306 676 284 684Q266 686 262 670z"/></svg>
    <svg class="ic" preserveAspectRatio="none" viewBox="0 714 210 196"><path class="b" d="M38 753Q80 750 110 786Q140 830 172 827V878Q134 880 106 846Q76 806 38 808z"/><path d="M38 812Q72 814 100 848Q130 886 166 882" stroke="#fff" stroke-width="3"/><path class="w" d="M31 800h17v17H31zM165 873h17v17h-17z"/></svg>
    <svg class="ic" preserveAspectRatio="none" viewBox="212 714 210 196"><ellipse class="g" cx="336" cy="832" rx="56" ry="42"/><path d="M296 804Q340 810 372 864M290 862Q310 810 360 796"/><path class="gh" d="M326 760V800Q290 796 282 826Q282 844 296 856L258 884Q238 840 248 796Q256 754 326 760z"/></svg>
    <svg class="ic" preserveAspectRatio="none" viewBox="0 910 210 196"><path class="b" d="M36 1068Q36 1010 80 972Q130 940 152 958Q164 970 166 1002Q116 1012 102 1056Q66 1036 36 1068z"/><path d="M170 1006Q120 1016 104 1060Q68 1042 40 1072" stroke="#fff" stroke-width="4"/><text x="142" y="1078" font-size="46" fill="#222">1</text></svg>
    <svg class="ic" preserveAspectRatio="none" viewBox="212 910 210 196"><path class="b" d="M246 1004Q256 958 300 948Q360 946 362 1054Q334 1034 306 1056Q300 1008 246 1004z"/><path d="M248 1008Q296 1012 306 1062Q334 1042 368 1060Q376 990 346 960" stroke="#fff" stroke-width="4"/><text x="242" y="1078" font-size="46" fill="#555">2</text></svg>
    <svg class="ic" preserveAspectRatio="none" viewBox="0 1106 210 196"><path class="gd" d="M42 1166Q46 1200 80 1230Q90 1250 66 1260Q66 1278 104 1280V1246H118Q118 1220 150 1196Q162 1180 160 1166z"/><ellipse class="b" cx="102" cy="1167" rx="59" ry="28"/><path d="M104 1136V1196" stroke-dasharray="3 4"/><path d="M104 1196V1280M160 1172Q160 1200 130 1222Q116 1244 140 1266" /><path d="M164 1172Q162 1204 134 1226Q120 1244 142 1268" stroke="#fff" stroke-width="4"/></svg>
    <svg class="ic" preserveAspectRatio="none" viewBox="212 1106 210 196"><path fill="#4769e6" d="M252 1272Q266 1230 266 1180Q276 1144 314 1144Q352 1146 362 1180Q364 1240 376 1274L360 1280L344 1272L316 1282L296 1276L276 1272z"/><ellipse class="n" cx="308" cy="1180" rx="36" ry="30" fill="#8fa6fb"/><path d="M314 1208V1280M336 1216V1270M286 1230L280 1270M298 1240V1276" stroke-width="3"/></svg>
    <svg class="ic" preserveAspectRatio="none" viewBox="0 1302 210 196"><path class="b" d="M42 1341H178V1467H42z"/><g class="n blobs" fill="#2746c4"><circle cx="98" cy="1384" r="24"/><circle cx="146" cy="1392" r="20"/><circle cx="102" cy="1432" r="24"/></g></svg>
    <svg class="ic" preserveAspectRatio="none" viewBox="212 1302 210 196"><path class="b" d="M249 1345H384V1470H249z"/><path id="prow" class="w" d="M241 1337h15v14h-15zM275 1337h15v14h-15zM309 1337h15v14h-15zM343 1337h15v14h-15zM377 1337h15v14h-15z" stroke="#111" stroke-width="2.500"/><use href="#prow" y="31"/><use href="#prow" y="63"/><use href="#prow" y="94"/><use href="#prow" y="126"/></svg>
  </aside>

  <section class="center">
    <div class="view">
      <svg class="scene" viewBox="149 722 3015 1186">
        <path d="M300 1437L1594 690L2888 1437L1594 2184z" fill="#9198a1"/>
        <path d="M300 1437L1594 690L2888 1437L1594 2184z" fill="url(#grid)"/>
        <path d="M1594 1437L2241 1063.500" stroke="#4c9a4c" stroke-width="2"/><path d="M1594 1437L2241 1810.500" stroke="#a04a42" stroke-width="2"/>
        <g class="solids" transform="translate(1400 1050) scale(.33333 .38265)">
          <!-- rear block -->
          <path class="f" fill="#a2a2a2" d="M1096 81L1324 197L1060 328L831 215z"/>
          <path class="f" fill="#949494" d="M1096 81L1238 156L1228 246L1096 310z"/>
          <path class="f" fill="#b3b3b4" d="M1238 156L1324 197L1228 244z"/>
          <path class="f" fill="#7f7f7f" d="M831 215L1060 328V768L831 656z"/>
          <path class="f" fill="#fff" d="M1060 328L1324 197V633L1060 768z"/>
          <path class="f" fill="#d6d6d6" d="M1060 328L1228 245V682L1060 768z"/>
          <path class="f" fill="#f4f4f4" d="M1170 557L1324 633L1228 682V588z"/>
          <path class="f" fill="#c9c9c9" d="M1170 557L1228 588V682L1170 712z"/>
          <path class="h" d="M1096 81V520L831 656M1096 520L1324 633"/>
          <path class="e" d="M831 330V215L1096 81L1324 197V633L1170 712M831 215L1060 328L1324 197"/>
          <!-- back-left block -->
          <path class="f" fill="#bbbcbd" d="M524 362L753 477L590 557L364 443z"/>
          <path class="f" fill="#b0b1b3" d="M524 362L753 477L590 557L524 525z"/>
          <path class="f" fill="#b3b5b6" d="M364 443L590 557V1010L364 897z"/>
          <path class="f" fill="#a1a2a4" d="M524 525L590 557V760H524z"/>
          <path class="f" fill="#77787a" d="M364 611L514 684V758L590 760V1010L364 897z"/>
          <path class="f" fill="#686868" d="M524 758H590V870L430 930V895L524 817z"/>
          <path class="f" fill="#fff" d="M590 557L753 477V929L590 1010z"/>
          <path class="f" fill="#d6d6d6" d="M590 758L753 741V929L590 1010z"/>
          <path class="f" fill="#e4e4e4" d="M590 852L753 929L700 955L590 900z"/>
          <path class="h" d="M524 362V817L364 897M524 817L753 929M590 1010L364 897"/>
          <path class="e" d="M364 725V443L524 362L753 477V929L724 944M364 443L590 557L753 477M590 557V880"/>
          <!-- tall tower -->
          <path class="f" fill="#bababa" d="M941 272L1169 386L1007 467L780 354z"/>
          <path class="f" fill="#acacac" d="M941 272L1060 328L1169 386L1007 467L941 435z"/>
          <path class="f" fill="#b2b3b4" d="M780 354L1007 467V1520L780 1407z"/>
          <path class="f" fill="#a3a4a5" d="M941 435L1007 467V1520L941 1400z"/>
          <path class="f" fill="#8d8d8d" d="M832 380L1007 467V740L832 656z"/>
          <path class="f" fill="#858585" d="M941 435L1007 467V740L941 708z"/>
          <path class="f" fill="#9e9e9e" d="M941 1325L1007 1358V1520L780 1407z"/>
          <path class="f" fill="#818283" d="M782 856L824 874V1098L782 1096z"/>
          <path class="f" fill="#fff" d="M1007 467L1169 386V1440L1007 1520z"/>
          <path class="f" fill="#ededed" d="M1007 467L1169 386V714L1060 768L1007 744z"/>
          <path class="f" fill="#f5f5f5" d="M1007 1358L1169 1440L1007 1520z"/>
          <path class="x" stroke="#d4d4d4" d="M1060 445V768L1169 714M1060 768L1007 744"/><path class="x" stroke="#777" d="M1007 740L831 656V382M831 656L941 600"/>
          <path class="x" stroke="#8db88f" opacity=".6" d="M824 886L1007 800"/><path class="x" stroke="#c99" opacity=".6" d="M806 1126L1007 1222"/>
          <path class="h" d="M941 272V1325L780 1407M941 1325L1169 1440"/>
          <path class="e" d="M780 1407V354L941 272L1169 386V1440L1007 1520zM780 354L1007 467L1169 386M1007 467V1520"/>
          <!-- front-left tower -->
          <path class="f" fill="#bfc0c1" d="M263 679L491 795L329 875L102 762z"/>
          <path class="f" fill="#b0b1b3" d="M263 679L491 795L329 875L263 843z"/>
          <path class="f" fill="#b3b4b5" d="M102 762L329 875V1500L102 1385z"/>
          <path class="f" fill="#a5a6a7" d="M263 843L329 875V1500L263 1470z"/>
          <path class="f" fill="#9e9e9e" d="M263 1303L329 1336V1500L102 1385z"/>
          <path class="f" fill="#fff" d="M329 875L491 795V1418L329 1500z"/>
          <path class="f" fill="#d2d2d3" d="M329 875L491 795V1000L329 1080z"/>
          <path class="f" fill="#f1f1f1" d="M428 826L491 795V875L428 903z"/>
          <path class="f" fill="#8a8a8b" d="M422 903L491 875V920L422 950z"/>
          <path class="f" fill="#d9d9d9" d="M458 1200L491 1215V1290L458 1280z"/>
          <path class="f" fill="#f5f5f5" d="M329 1336L491 1418L329 1500z"/>
          <path class="h" d="M263 679V1303L102 1385M263 1303L491 1418"/>
          <path class="e" d="M102 1385V762L263 679L491 795V1418L329 1500zM102 762L329 875L491 795M329 875V1500"/>
          <!-- small cube -->
          <path class="f" fill="#c0c0c1" d="M573 871L800 987L638 1067L411 953z"/>
          <path class="f" fill="#b6b6b8" d="M573 871L800 987L638 1067L573 1035z"/>
          <path class="f" fill="#acacad" d="M411 953L638 1067V1291L411 1178z"/>
          <path class="f" fill="#979797" d="M422 960L491 995V1124H422z"/>
          <path class="f" fill="#9e9e9e" d="M573 1096L638 1130V1291L411 1178z"/>
          <path class="f" fill="#fff" d="M638 1067L800 987V1211L638 1291z"/>
          <path class="f" fill="#f5f5f5" d="M638 1130L800 1211L638 1291z"/>
          <path class="x" stroke="#8e8e8e" d="M590 882V1010L724 944M590 1010L491 962V1200"/><path class="x" stroke="#ddd" d="M778 1000V1200"/>
          <path class="h" d="M573 871V1096L411 1178M573 1096L800 1211"/>
          <path class="e" d="M411 1178V953L573 871L800 987V1211L638 1291zM411 953L638 1067L800 987M638 1067V1291"/>
        </g>
        <g fill="none" stroke="#5e5e5e" stroke-width="1.500"><path d="M240 1757V1819L291 1788M240 1819L291 1848"/></g>
        <g class="axis"><text x="244" y="1758">z</text><text x="298" y="1787">y</text><text x="298" y="1850">x</text></g>
      </svg>
      <div class="vtitle"><b>Parallel</b><i></i></div>
    </div>
    <div class="vtabs"><span class="on">Parallel</span><span>Top</span><span>Front</span><span>Right</span><span class="on plus"><svg viewBox="0 0 24 24"><path d="M9 2h6v7h7v6h-7v7H9v-7H2V9h7z" fill="none" stroke="#999" stroke-width="1.500"/></svg></span></div>
  </section>

  <aside class="right">
    <div class="ptabs">
      <span><svg class="ic" preserveAspectRatio="none" viewBox="73 70 172 130"><ellipse class="n" cx="127" cy="137" rx="39" ry="43" fill="#222"/><g stroke-width="8" transform="translate(127 137) scale(1 1.090)"><path stroke="#f33" d="M0-28A28 28 0 0 1 20-20"/><path stroke="#fa1" d="M20-20A28 28 0 0 1 28 0"/><path stroke="#9e1" d="M28 0A28 28 0 0 1 20 20"/><path stroke="#1d6" d="M20 20A28 28 0 0 1 0 28"/><path stroke="#1cc" d="M0 28A28 28 0 0 1-20 20"/><path stroke="#26f" d="M-20 20A28 28 0 0 1-28 0"/><path stroke="#83f" d="M-28 0A28 28 0 0 1-20-20"/><path stroke="#f3c" d="M-20-20A28 28 0 0 1 0-28"/></g><ellipse class="n" cx="127" cy="137" rx="20" ry="22" fill="#d8d8d8"/></svg></span>
      <span><svg class="ic" preserveAspectRatio="none" viewBox="245 70 172 130"><path fill="#f0845c" d="M259 91L342 110L294 134z"/><path fill="#f21" d="M259 91L294 134L342 110V128L294 152L259 112z"/><path class="w" d="M261 112L294 152L342 128V146L294 168L262 130z"/><path fill="#26c" d="M262 130L294 168L342 146V164L294 184L264 150z"/></svg></span>
      <span><svg class="ic" preserveAspectRatio="none" viewBox="418 70 172 130"><path class="g" d="M440 160L454 138L470 140L486 98L496 95L506 104L490 144L470 178L448 174z"/><path fill="#f72" d="M470 140L478 116L498 122L488 146z"/><path d="M470 140Q462 150 470 178M454 140l4 34"/></svg></span>
      <span><svg class="ic" preserveAspectRatio="none" viewBox="590 70 172 130"><path fill="#e8b820" d="M606 166V112L620 106L632 114H668V130H682L668 166z"/><path fill="#ffe46a" d="M606 166L620 130H682L668 166z"/></svg></span>
      <span><svg class="ic" preserveAspectRatio="none" viewBox="763 70 172 130"><path class="w" d="M778 95H856V179H778z"/><path class="n" fill="#3a55b4" d="M779 96H855V106H779z"/><path class="n" fill="#4668cf" d="M785 170Q782 114 818 112Q852 116 850 170z"/><text x="805" y="162" font-size="52" fill="#fff" class="bold">?</text></svg></span>
      <span><svg class="ic" preserveAspectRatio="none" viewBox="935 70 172 130"><ellipse class="n" cx="988" cy="172" rx="38" ry="14" fill="#777"/><ellipse cx="984" cy="141" rx="35" ry="38" fill="url(#gs)"/><path class="w" d="M976 102L996 92H1030V112L1010 118L992 120L1000 108L980 112z"/></svg></span>
      <span class="on"><svg class="ic" preserveAspectRatio="none" viewBox="1111 70 172 130"><path class="k" d="M1123 94H1204V166H1180V178H1148V166H1123z"/><path class="n g" d="M1130 101H1197V158H1130z"/></svg></span>
      <span><svg class="ic" preserveAspectRatio="none" viewBox="1284 70 172 130"><path fill="#0a7cf5" d="M1310 172Q1312 110 1326 100Q1338 88 1352 100Q1368 120 1370 166L1380 174z"/><path class="k" d="M1330 176h20l-10 10zM1332 96l8-8 8 8z"/></svg></span>
      <svg class="gear big" viewBox="0 0 40 40"><use href="#gear" width="40" height="40"/></svg>
    </div>
    <div class="props">
      <div class="table">
        <div class="row"><span>Active viewport</span><em>Parallel</em></div>
        <div class="row"><span>Display mode</span><em>Ghosted</em><u></u></div>
        <div class="row head"><span>General settings</span></div>
        <div class="row in"><span>Background</span><em>Solid Color</em><u></u></div>
        <div class="row in2"><span>Color:</span><em class="swatch"></em></div>
        <div class="row in"><span>Flat Shading</span><em><svg class="cb"><use href="#tick"/></svg></em></div>
        <div class="row in"><span>Shade vertex colo...</span><em><svg class="cb"><use href="#tick"/></svg></em></div>
        <div class="row in"><span>Shadows</span><em><svg class="cb"><use href="#tick"/></svg></em></div>
        <div class="row in"><span>Surface Isocurves</span><em><svg class="cb"></svg></em></div>
        <div class="row in"><span>Surface Edges</span><em><svg class="cb"><use href="#tick"/></svg></em></div>
        <div class="row in"><span>Tangent Edges</span><em><svg class="cb"><use href="#tick"/></svg></em></div>
        <div class="row in"><span>Tangent Seams</span><em><svg class="cb"><use href="#tick"/></svg></em></div>
        <div class="row in"><span>Mesh Wires</span><em><svg class="cb"><use href="#tick"/></svg></em></div>
        <div class="row in"><span>Curves</span><em><svg class="cb"><use href="#tick"/></svg></em></div>
        <div class="row in"><span>Lights</span><em><svg class="cb"><use href="#tick"/></svg></em></div>
        <div class="row in"><span>Clipping Planes</span><em><svg class="cb"><use href="#tick"/></svg></em></div>
        <div class="row in"><span>Text</span><em><svg class="cb"><use href="#tick"/></svg></em></div>
        <div class="row in"><span>Annotations</span><em><svg class="cb"><use href="#tick"/></svg></em></div>
        <div class="row in"><span>Points</span><em><svg class="cb"><use href="#tick"/></svg></em></div>
        <div class="row in"><span>Pointclouds</span><em><svg class="cb"><use href="#tick"/></svg></em></div>
        <div class="row in"><span>Transparency</span><em>35</em><svg class="spin" viewBox="0 0 42 43"><path d="M1 1h40v20H1zM1 22h40v20H1z" fill="#e8e8e8" stroke="#aaa" stroke-width="1.500"/><path d="M15 14l6-6 6 6zM15 29l6 6 6-6z"/></svg></div>
        <div class="row head"><span>Grid &amp; Axis settings</span></div>
        <div class="row in"><span>Grid</span><em><svg class="cb"><use href="#tick"/></svg></em></div>
      </div>
      <div class="scroll"><svg viewBox="0 0 41 43"><path d="M12 24l8-8 8 8" fill="none" stroke="#505050" stroke-width="5"/></svg><div class="thumb"></div><svg viewBox="0 0 41 43"><path d="M12 16l8 8 8-8" fill="none" stroke="#505050" stroke-width="5"/></svg></div>
    </div>
    <div class="edit">Edit "Ghosted" settings...</div>
  </aside>
</main>

<section class="osnap"><label><svg class="cb"><use href="#tick"/></svg>End</label><label><svg class="cb"><use href="#tick"/></svg>Near</label><label><svg class="cb"><use href="#tick"/></svg>Point</label><label><svg class="cb"><use href="#tick"/></svg>Mid</label><label><svg class="cb"></svg>Cen</label><label><svg class="cb"></svg>Int</label><label><svg class="cb"></svg>Perp</label><label><svg class="cb"></svg>Tan</label><label><svg class="cb"></svg>Quad</label><label><svg class="cb"></svg>Knot</label><label><svg class="cb"></svg>Vertex</label><label><svg class="cb off"></svg>Project</label><label><svg class="cb off"></svg>Disable</label></section>
<footer><span>CPlane</span><span>x 12.40</span><span>y 30.73</span><span>z 0.00</span><span>Feet</span><span class="layer"><i></i>Default</span><span>Grid Snap</span><span>Ortho</span><span class="act">Planar</span><span class="act">Osnap</span><span class="act">SmartTrack</span><span class="act">Gumball</span><span>Record History</span><span>Filter</span><span class="mem">Memory use: 521 MB</span></footer>
</body>
</html>
```

FILE: styles.css
```css
*{box-sizing:border-box}
body{margin:0;width:3840px;height:2064px;overflow:hidden;background:#eaebef;color:#000;font:29px/40px "Noto Sans","Open Sans",sans-serif;letter-spacing:-.5px;display:flex;flex-direction:column}
p{margin:0}
svg{display:block;flex:none}
.defs{position:absolute}

.title{height:56px;flex:none;background:#fff;display:flex;align-items:center;padding-left:2px}
.logo{width:40px;height:40px;margin-right:7px}
.winctl{width:284px;height:40px;margin-left:auto;margin-right:42px;overflow:visible}
.menu{height:47px;flex:none;background:#fff;display:flex;align-items:center;padding:2px 0 0 8px;letter-spacing:-.7px}
.menu span{width:59px;white-space:nowrap}
.menu span:nth-child(2){width:63px}
.menu span:nth-child(3){width:78px}
.menu span:nth-child(4){width:90px}
.menu span:nth-child(5){width:111px}
.menu span:nth-child(6){width:81px}
.menu span:nth-child(7){width:87px}
.menu span:nth-child(8){width:155px}
.menu span:nth-child(9){width:145px;letter-spacing:-1px}
.menu span:nth-child(10){width:83px}
.menu span:nth-child(11){width:118px}
.menu span:nth-child(12){width:108px}
.menu span:nth-child(13){width:98px}
.menu span:nth-child(14){width:203px}

.cmd{height:134px;flex:none;padding:5px 0 3px 8px;border-bottom:2px solid #d9dae2;display:flex}
.cmdtext{flex:1;border-left:3px double #c8cfe4;height:126px}
.cmdtext p{background:#fff;margin-left:5px;height:40px;padding-left:1px;line-height:37px;letter-spacing:-.4px}
.cmdtext p+p{line-height:42px}
.cmdtext .prompt{height:45px;border-top:2px solid #c5c7dd;display:flex;align-items:center;line-height:39px}
.prompt i{width:2px;height:41px;background:#000;margin-left:2px}
.prompt b{height:43px}
.cmdscroll{width:42px;height:125px}

.bar{flex:none;display:flex;align-items:flex-start;border-bottom:2px solid #dcdce4;padding:6px 0 0 5px;position:relative}
.bar::before{content:"";width:1px;height:calc(100% - 2px);border:1px solid #c8cfe4;border-width:0 1px;margin-right:5px;margin-left:3px;align-self:stretch}
.bar1{height:94px;padding-top:8px;gap:10px}
.bar1::before{margin-right:-1px}
.round{width:60px;height:60px}
.bar2{height:81px}
.bar3{height:79px}
.ic{width:70px;height:64px;fill:none;stroke:#222;stroke-width:2;stroke-linejoin:round}
.ic *{vector-effect:non-scaling-stroke}
.ic text{stroke:none}
.o{stroke:#444;stroke-width:2.6}
.w{fill:#fff}
.k{fill:#111}
.b{fill:url(#gb)}
.d,.gd{fill:url(#gd)}
.gh{fill:url(#gh)}
.g{fill:url(#gg)}
.n{stroke:none}
.blobs{filter:blur(12px);opacity:.9}
.wh{stroke:#fff;stroke-width:3}
.tri{fill:#777;stroke:none}
.mono{font-family:"Liberation Mono",monospace}
.bold{font-weight:700}
.sep{width:6px;height:66px;margin:-1px 0;background:linear-gradient(90deg,transparent 3px,#cfd0da 3px,#cfd0da 4px,transparent 4px)}

.tabs{height:54px;flex:none;margin-left:16px;padding-top:4px;border-bottom:2px solid #c5c7dd;display:flex;position:relative;overflow:hidden}
.tabs span{position:relative;z-index:0;height:49px;line-height:50px;white-space:nowrap;padding-left:32px;width:184px}
.tabs span::before,.tabs span::after{content:"";position:absolute;z-index:-1;top:0;bottom:0;background:#d6d6d6;border:2px solid #c5c7dd}
.tabs span::before{left:-7px;width:80px;border-width:2px 0 0 2px;border-radius:6px 0 0 0;transform:skewX(-39deg)}
.tabs span::after{left:60px;right:0;border-width:2px 2px 0 0;border-radius:0 10px 0 0}
.tabs span:nth-child(n+2){width:169px;padding-left:31px}
.tabs span:nth-child(3){width:178px;padding-left:32px}
.tabs span:nth-child(4){width:162px;padding-left:34px}
.tabs span:nth-child(5){width:144px;padding-left:33px}
.tabs span:nth-child(6){width:282px;padding-left:31px}
.tabs span:nth-child(7){width:175px;padding-left:31px}
.tabs span:nth-child(8){width:196px;padding-left:30px}
.tabs span:nth-child(9){width:217px;padding-left:29px}
.tabs span:nth-child(10){width:240px;padding-left:31px;z-index:2}
.tabs span:nth-child(11){width:208px;padding-left:31px}
.tabs span:nth-child(12){width:216px;padding-left:31px}
.tabs span:nth-child(13){width:170px;padding-left:29px}
.tabs span:nth-child(14){width:201px;padding-left:33px}
.tabs .on::before,.tabs .on::after{background:#eaebef;bottom:-2px}
.tabs .gear{width:40px;height:40px;margin:3px 0 0 auto}
.tools{height:77px;padding-top:8px}
.plugins{height:97px;border:0}
.plugins label{width:132px;padding-left:4px;line-height:65px;position:relative}
.plugins label:nth-of-type(2){width:112px}
.plugins label:nth-of-type(3){width:145px}
.mat svg{position:absolute;width:15px;height:15px;right:5px;top:52px}

main{height:1252px;flex:none;display:grid;grid-template-columns:148px 3017px 1fr}
.left{display:grid;grid-template-columns:70px 70px;grid-auto-rows:70px;align-content:start;padding-top:17px;background:linear-gradient(#c3cbe0,#c3cbe0) 3px 11px/139px 1px no-repeat,linear-gradient(#c3cbe0,#c3cbe0) 3px 14px/139px 1px no-repeat}
.left .ic{width:70px;height:70px}
.view{border:2px solid #c0c2d8;border-width:3px 1px 2px;height:1192px;position:relative;background:#707070}
.scene{width:3015px;height:1187px}
.solids *{vector-effect:non-scaling-stroke;stroke-linejoin:round}
.e{fill:none;stroke:#000;stroke-width:2.2}
.h{fill:none;stroke:#333;stroke-opacity:.62;stroke-width:1.8}
.x{fill:none;stroke-width:1.5}
.f{stroke:none}
.axis text{font-size:34px;fill:#5e5e5e}
.vtitle{position:absolute;left:0;top:0;width:157px;height:45px;background:#8aa4c1;border-bottom-right-radius:8px;display:flex;padding-left:12px;line-height:40px}
.vtitle b{width:117px;border-right:1px solid #000;margin:2px 0}
.vtitle i{border:9px solid transparent;border-top-color:#000;margin:17px 0 0 5px;height:0}
.vtabs{display:flex;height:52px}
.vtabs span{position:relative;z-index:0;height:51px;line-height:50px;width:132px;padding-left:27px}
.vtabs span::before,.vtabs span::after{content:"";position:absolute;inset:0;z-index:-2;background:#c5c7dd;clip-path:polygon(0 0,100% 0,100% 100%,24px 100%,0 50%)}
.vtabs span::after{z-index:-1;inset:0 2px 2px 2px;background:#d6d6d6}
.vtabs .on::after{background:#eaebef}
.vtabs span:nth-child(2){width:89px;padding-left:28px}
.vtabs span:nth-child(3){width:111px;padding-left:30px}
.vtabs span:nth-child(4){width:110px;padding-left:29px}
.vtabs .plus{width:72px;padding:13px 0 0 30px}
.plus svg{width:24px;height:24px}

.right{margin-left:7px;padding-top:11px;background:linear-gradient(#c3cbe0,#c3cbe0) 0 11px/100% 1px no-repeat,linear-gradient(#c3cbe0,#c3cbe0) 0 14px/100% 1px no-repeat}
.ptabs{display:flex;height:63px;padding-top:10px;border-bottom:2px solid #c5c7dd;position:relative}
.ptabs span{width:77.200px;height:51px;position:relative;z-index:0;flex:none}
.ptabs span::before,.ptabs span::after{content:"";position:absolute;inset:0 -28px 0 0;background:#c5c7dd;clip-path:polygon(0 8px,8px 0,49px 0,100% 100%,0 100%)}
.ptabs span::after{inset:2px -26px 0 2px;background:#d8d8d8}
.ptabs .on::after{background:#eaebef;bottom:-2px}
.ptabs .on{z-index:3}
.ptabs .ic{width:77px;height:53px;position:relative;z-index:1;top:-1px;left:-1px}
.ptabs .big{position:absolute;right:3px;top:16px;width:40px;height:40px}
.props{height:1091px;border-left:2px solid #c5c7dd;display:flex;padding:2px 0 0 2px}
.table{width:618px;height:1089px;overflow:hidden;border:1px solid #e8e8ea;background:#fff;flex:none}
.row{height:47px;border-bottom:2px solid #ececee;display:flex;position:relative;line-height:45px;white-space:nowrap}
.row span{width:308px;padding-left:2px;border-right:1px solid #e8e8ea;flex:none}
.row em{font-style:normal;padding-left:4px;flex:1}
.row.in{background:linear-gradient(#f7f7f7,#f7f7f7) 0 0/45px 100% no-repeat}
.row.in span{padding-left:48px}
.row.in2{background:linear-gradient(#f7f7f7,#f7f7f7) 0 0/91px 100% no-repeat}
.row.in2 span{padding-left:94px}
.row.head{height:58px;background:#f7f7f7;font-size:35px;line-height:58px;letter-spacing:-.8px}
.row.head span{border:0}
.row u{width:46px;height:46px;background:#e1e1e1;border:1px solid #adadad;border-width:1px 0 0 1px;position:relative}
.row u::after{content:"";position:absolute;left:17px;top:12px;width:10px;height:10px;border:solid #444;border-width:0 1.5px 1.5px 0;transform:rotate(45deg)}
.row .swatch{background:#707070;border:2px solid #adadad;outline:3px solid #e1e1e1;outline-offset:-5px;margin:0 0 0 1px}
.cb{width:33px;height:32px;background:#fff;border:2px solid #333;overflow:hidden}
.row .cb{margin-top:5px}
.spin{width:42px;height:43px;margin:1px 2px 0 0}
.scroll{width:41px;margin-left:2px;background:#f0f0f0}
.scroll svg{width:41px;height:43px}
.thumb{height:861px;background:#cdcdcd;margin-bottom:143px}
.edit{height:71px;margin:0 4px 0 4px;border:2px solid #0078d7;background:#e1e1e1;text-align:center;line-height:67px;padding-right:4px;box-shadow:0 5px 0 -1px #eaebef,0 7px 0 -1px #c5c7dd}

.osnap{height:55px;flex:none;display:flex;padding:11px 0 0 23px;background:linear-gradient(#c8cfe4,#c8cfe4) 9px 0/1px 52px no-repeat,linear-gradient(#c8cfe4,#c8cfe4) 12px 0/1px 52px no-repeat}
.osnap label{display:flex;width:108px;line-height:34px;gap:8px;white-space:nowrap;height:34px}
.osnap .cb{width:32px}
.osnap .off{background:#dcdcdc;border:1px solid #aaa}
.osnap label:nth-child(2){width:121px}
.osnap label:nth-child(3){width:128px}
.osnap label:nth-child(4){width:110px}
.osnap label:nth-child(5){width:109px}
.osnap label:nth-child(6){width:93px}
.osnap label:nth-child(7){width:119px}
.osnap label:nth-child(8){width:106px}
.osnap label:nth-child(9){width:131px}
.osnap label:nth-child(10){width:120px}
.osnap label:nth-child(11){width:144px}
.osnap label:nth-child(12){width:172px}
footer{height:37px;flex:none;border-top:2px solid #c5c7dd;border-bottom:2px solid #222;display:flex;line-height:35px;text-align:center;white-space:nowrap;box-shadow:0 4px 0 #fff}
footer span{width:208px;border-right:1px solid #c5c7dd;flex:none}
footer span:nth-child(1){width:112px}
footer .layer{width:407px;display:flex;padding-left:6px}
.layer i{width:25px;height:26px;background:#000;margin:4px 6px 0 0}
footer span:nth-child(7){width:153px}
footer span:nth-child(8){width:102px}
footer span:nth-child(9){width:104px}
footer span:nth-child(10){width:110px}
footer span:nth-child(11){width:169px}
footer span:nth-child(12){width:134px}
footer span:nth-child(13){width:219px}
footer span:nth-child(14){width:88px}
footer .act{background:#e4f4ff;font-weight:700;letter-spacing:-.9px}
footer .mem{width:auto;border:0;padding-left:3px}
```
